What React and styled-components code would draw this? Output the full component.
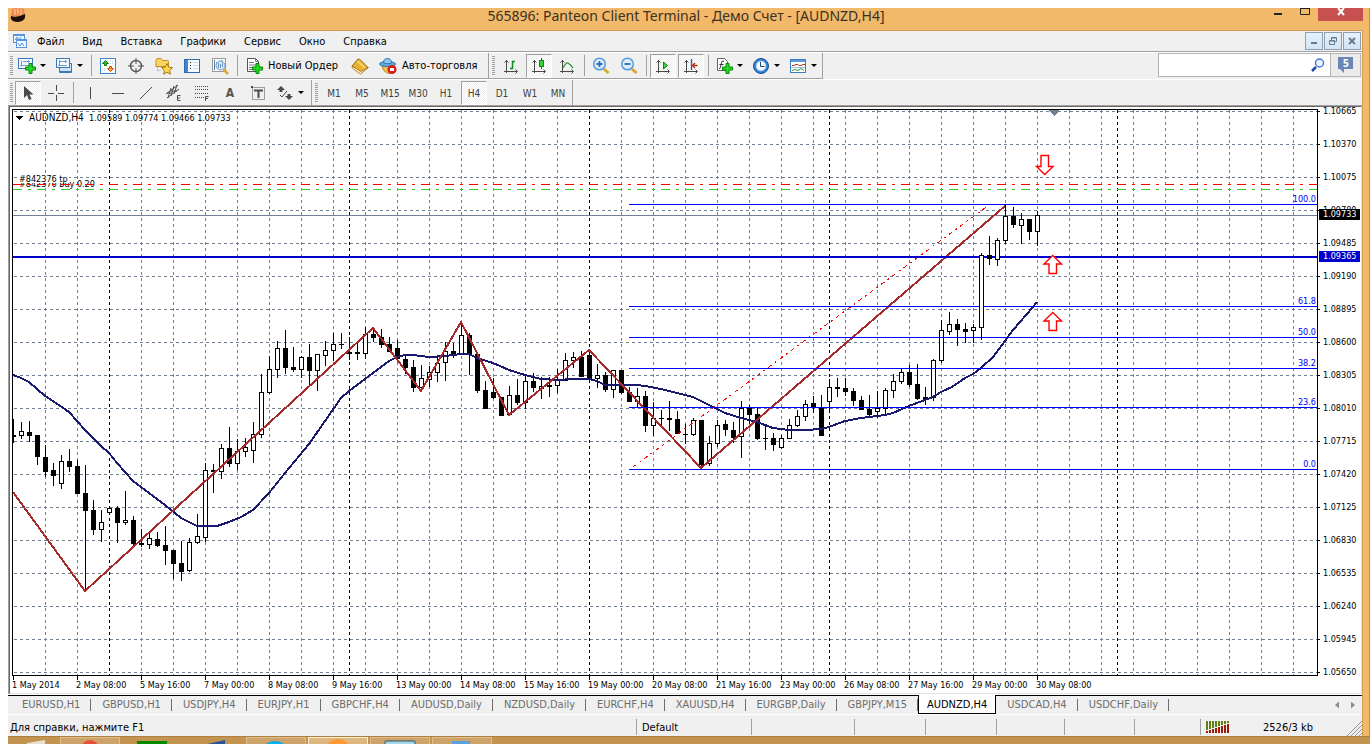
import React from "react";
import styled, { createGlobalStyle, css } from "styled-components";

const GlobalStyle = createGlobalStyle`
  * {
    box-sizing: border-box;
  }
  html, body {
    margin: 0;
    background: #ffffff;
    overflow: hidden;
  }
  body {
    padding: 8px 0 0 8px;
    font-family: "DejaVu Sans Condensed", "DejaVu Sans", "Noto Sans", sans-serif;
    font-size: 11px;
    color: #000000;
  }
  button, input {
    font: inherit;
    color: inherit;
    padding: 0;
    border: 0;
    background: none;
  }
`;

const Frame = styled.div`
  background: #f2b96b;
  border-right: 1px solid #c08f50;
`;

const TitleBar = styled.header`
  display: flex;
  align-items: flex-start;
  height: 22px;
  padding-right: 6px;
`;

const Title = styled.h1`
  flex: 1;
  margin: 0;
  padding-left: 80px;
  text-align: center;
  font-family: "Noto Sans", "Open Sans", sans-serif;
  font-size: 14px;
  font-weight: 400;
  line-height: 16px;
  color: #3b3022;
`;

const CaptionButton = styled.button`
  display: flex;
  justify-content: center;
  width: ${props => (props.$close ? "45px" : "27px")};
  height: 13px;
  background: ${props => (props.$close ? "#c75050" : "transparent")};
`;

const Client = styled.div`
  margin-right: 6px;
  border-top: 1px solid #d39d58;
  border-right: 1px solid #d39d58;
  background: #f0f0f0;
`;

const MenuBar = styled.nav`
  display: flex;
  align-items: center;
  gap: 18px;
  height: 21px;
  padding: 0 1px 0 4px;
  border-bottom: 1px solid #a0a0a0;
`;

const MenuIcon = styled.span`
  display: flex;
  width: 16px;
  margin-right: -9px;
`;

const MenuItem = styled.button`
  padding-top: 2px;
  line-height: 18px;
`;

const MdiButtons = styled.div`
  display: flex;
  gap: 1px;
  margin-left: auto;
`;

const MdiButton = styled.button`
  display: flex;
  align-items: center;
  justify-content: center;
  width: 18px;
  height: 18px;
  border: 1px solid #8e9fb2;
  background: linear-gradient(#e6f1fb, #d3e5f5);
`;

const ToolRow = styled.div`
  display: flex;
  justify-content: space-between;
  height: 27px;
  border-top: 1px solid #ffffff;
  ${props => props.$last && css`
    border-bottom: 1px solid #a0a0a0;
  `}
`;

const Groups = styled.div`
  display: flex;
  ${props => props.$lined && css`
    border-bottom: 1px solid #a0a0a0;
  `}
`;

const Group = styled.div`
  display: flex;
  align-items: center;
  padding-left: 2px;
  padding-right: ${props => props.$end || 0}px;
  border-right: 1px solid #a0a0a0;
`;

const Grip = styled.span`
  width: 3px;
  height: 20px;
  margin-right: ${props => (props.$wide ? "2px" : "1px")};
  margin-left: ${props => (props.$wide ? "1px" : "0")};
  background: repeating-linear-gradient(#a0a0a0 0 1px, #f0f0f0 1px 2px);
`;

const Divider = styled.span`
  width: 1px;
  height: 21px;
  margin: 0 2px 0 3px;
  background: #a0a0a0;
`;

const Tool = styled.button`
  display: flex;
  align-items: center;
  justify-content: center;
  width: 28px;
  height: 24px;
  font-size: 10px;
  color: #404040;
  ${props => props.$pressed && css`
    width: 26px;
    margin: 0 1px;
    border: 1px solid #ffffff;
    border-top-color: #a0a0a0;
    border-left-color: #a0a0a0;
    background: repeating-conic-gradient(#ffffff 0 25%, #f0f0f0 0 50%) 0 0 / 2px 2px;
  `}
`;

const PeriodName = styled.span`
  padding-top: 1px;
`;

const LetterTool = styled(Tool)`
  font-size: 12px;
  font-weight: 700;
  color: #555555;
`;

const DropTool = styled.button`
  display: flex;
  align-items: center;
  gap: 4px;
  width: 37px;
  height: 24px;
  padding-left: 4px;
  &::after {
    content: "";
    border: 3px solid transparent;
    border-top-color: #000000;
    border-bottom: 0;
  }
`;

const TextTool = styled.button`
  display: flex;
  align-items: center;
  gap: 5px;
  width: ${props => props.$width}px;
  height: 24px;
  padding-left: 5px;
  white-space: nowrap;
`;

const Search = styled.form`
  display: flex;
  align-items: center;
  width: 203px;
  height: 24px;
  margin-right: 1px;
  border: 1px solid #b4b4b4;
  background: #ffffff;
`;

const SearchInput = styled.input`
  flex: 1;
  min-width: 0;
  height: 22px;
  padding: 0 4px;
  outline: 0;
`;

const SearchButton = styled.button`
  display: flex;
  align-items: center;
  width: 19px;
  height: 22px;
`;

const NewsButton = styled.button`
  display: flex;
  align-items: center;
  justify-content: center;
  width: 30px;
  height: 22px;
  border-left: 1px solid #b4b4b4;
  background: #ebebeb;
`;

const ChartBack = styled.div`
  display: flow-root;
  background: #ffffff;
`;

const ChartWindow = styled.main`
  display: grid;
  grid-template-columns: minmax(0, 1fr) 43px;
  margin: 0 0 1px 1px;
  padding-left: 2px;
  border: 1px solid #696969;
  border-right-color: #e3e3e3;
  border-bottom-color: #e3e3e3;
  box-shadow: -1px 0 0 #a0a0a0;
  background: #ffffff;
  font-size: 9px;
`;

const Plot = styled.div`
  margin-top: 2px;
  border: 1px solid #000000;
`;

const PlotSvg = styled.svg`
  display: block;
  width: 100%;
  height: 565px;
  shape-rendering: crispEdges;
  font-size: 9px;
`;

const PriceAxis = styled.div`
  position: relative;
`;

const Price = styled.div`
  display: flex;
  align-items: center;
  gap: 3px;
  height: 8px;
  margin-bottom: 25px;
  &:last-of-type {
    margin-bottom: 0;
  }
  &::before {
    content: "";
    width: 2px;
    height: 1px;
    background: #000000;
  }
`;

const PriceTag = styled.span`
  position: absolute;
  left: 1px;
  right: 1px;
  top: ${props => props.$top}px;
  height: 11px;
  padding-left: 4px;
  line-height: 11px;
  color: #ffffff;
  background: ${props => props.$color};
`;

const TimeAxis = styled.div`
  display: flex;
  height: 17px;
  overflow: hidden;
`;

const Time = styled.div`
  flex: 0 0 64px;
  white-space: nowrap;
  line-height: 11px;
  &::before {
    content: "";
    display: block;
    width: 1px;
    height: 4px;
    margin-left: 1px;
    background: #000000;
  }
`;

const TabBar = styled.div`
  display: flex;
  height: 20px;
  padding-left: 3px;
  border-top: 1px solid #000000;
  border-bottom: 1px solid #ffffff;
`;

const Tab = styled.button`
  position: relative;
  flex: none;
  height: 18px;
  padding: 0 11px;
  line-height: 16px;
  color: #6d6d6d;
  &::after {
    content: "";
    position: absolute;
    right: 0;
    top: 3px;
    width: 1px;
    height: 12px;
    background: #6d6d6d;
  }
  ${props => props.$active && css`
    margin-top: -1px;
    height: 19px;
    padding: 1px 8px 0;
    border: 1px solid #000000;
    border-top: 0;
    color: #000000;
    background: #ffffff;
    &::after {
      display: none;
    }
  `}
`;

const TabScroll = styled.div`
  display: flex;
  align-items: center;
  gap: 12px;
  margin-left: auto;
  padding-right: 7px;
`;

const ScrollButton = styled.button`
  width: 4px;
  height: 7px;
  background: #8c8c8c;
  clip-path: ${props => (props.$next ? "polygon(0 0, 100% 50%, 0 100%)" : "polygon(100% 0, 0 50%, 100% 100%)")};
`;

const StatusBar = styled.footer`
  display: flex;
  align-items: flex-end;
  height: 21px;
`;

const StatusCell = styled.div`
  display: flex;
  align-items: center;
  flex: ${props => (props.$width ? `0 0 ${props.$width}px` : "1 1 0")};
  gap: 33px;
  min-width: 0;
  height: 16px;
  margin-bottom: 1px;
  padding-left: ${props => (props.$first ? "2px" : "5px")};
  white-space: nowrap;
  ${props => !props.$first && css`
    border-left: 1px solid #a0a0a0;
  `}
`;

const ResizeGrip = styled.svg`
  flex: none;
`;

const TaskBar = styled.div`
  display: flex;
  height: 8px;
  overflow: hidden;
  background: #c39350;
  border-top: 1px solid #ad803f;
`;

const Task = styled.button`
  display: flex;
  justify-content: center;
  align-items: flex-start;
  flex: none;
  width: ${props => (props.$narrow ? "50px" : "60px")};
  height: 30px;
  margin-right: 2px;
  border: 1px solid ${props => (props.$active ? "#fff0d8" : props.$open ? "#e0bf90" : "transparent")};
  background: ${props => (props.$active ? "#dfb87f" : props.$open ? "#cda369" : "transparent")};
`;

const menu = ["Файл", "Вид", "Вставка", "Графики", "Сервис", "Окно", "Справка"];
const periods = ["M1", "M5", "M15", "M30", "H1", "H4", "D1", "W1", "MN"];
const tabs = [
  "EURUSD,H1", "GBPUSD,H1", "USDJPY,H4", "EURJPY,H1", "GBPCHF,H4", "AUDUSD,Daily", "NZDUSD,Daily",
  "EURCHF,H4", "XAUUSD,H4", "EURGBP,Daily", "GBPJPY,M15", "AUDNZD,H4", "USDCAD,H4", "USDCHF,Daily",
];
const prices = [
  "1.10665", "1.10370", "1.10075", "1.09780", "1.09485", "1.09190", "1.08895", "1.08600", "1.08305",
  "1.08010", "1.07715", "1.07420", "1.07125", "1.06830", "1.06535", "1.06240", "1.05945", "1.05650",
];
const times = [
  "1 May 2014", "2 May 08:00", "5 May 16:00", "7 May 00:00", "8 May 08:00", "9 May 16:00",
  "13 May 00:00", "14 May 08:00", "15 May 16:00", "19 May 00:00", "20 May 08:00", "21 May 16:00",
  "23 May 00:00", "26 May 08:00", "27 May 16:00", "29 May 00:00", "30 May 08:00",
];
const fibo = [
  ["100.0", 94], ["61.8", 196], ["50.0", 227], ["38.2", 258], ["23.6", 297], ["0.0", 359],
];

// chart space starts at this point, one bar every 8px
const LEFT = 13;
const TOP = 110;
const STEP = 8;

// high, body top, body bottom, low, rising
const candles = [
  [419, 435, 437, 443, 0], [422, 431, 436, 439, 1], [421, 432, 436, 442, 0], [435, 435, 457, 465, 0],
  [445, 457, 472, 477, 0], [463, 470, 476, 486, 0], [455, 461, 484, 489, 1], [449, 461, 467, 472, 0],
  [460, 466, 494, 494, 0], [465, 493, 511, 591, 0], [500, 510, 530, 535, 0], [510, 522, 530, 542, 1],
  [506, 508, 513, 515, 1], [506, 508, 523, 543, 0], [491, 520, 523, 525, 1], [516, 520, 544, 545, 0],
  [529, 543, 545, 547, 0], [532, 538, 545, 549, 1], [532, 539, 546, 547, 0], [526, 545, 551, 565, 0],
  [550, 550, 564, 579, 0], [541, 563, 572, 581, 0], [538, 542, 571, 572, 1], [514, 536, 543, 544, 1],
  [463, 470, 538, 542, 1], [464, 470, 472, 493, 0], [444, 448, 472, 479, 1], [427, 448, 464, 467, 0],
  [439, 451, 464, 470, 1], [438, 447, 452, 457, 1], [422, 434, 451, 463, 1], [374, 392, 435, 438, 1],
  [356, 369, 393, 394, 1], [341, 348, 370, 378, 1], [330, 348, 368, 374, 0], [347, 367, 370, 372, 0],
  [356, 357, 370, 378, 1], [344, 357, 371, 385, 0], [354, 354, 371, 391, 1], [341, 350, 356, 366, 1],
  [333, 344, 351, 361, 1], [333, 344, 345, 349, 0], [337, 352, 354, 360, 0], [342, 352, 354, 360, 0],
  [327, 334, 354, 359, 1], [327, 334, 338, 342, 0], [329, 337, 345, 348, 0], [337, 344, 352, 352, 0],
  [340, 348, 359, 360, 0], [355, 359, 368, 374, 0], [360, 367, 388, 392, 0], [365, 378, 388, 390, 1],
  [366, 372, 380, 387, 1], [355, 363, 373, 382, 1], [342, 351, 363, 381, 1], [343, 351, 355, 358, 0],
  [322, 335, 355, 355, 1], [333, 335, 355, 375, 0], [354, 354, 391, 393, 0], [381, 390, 409, 409, 0],
  [378, 392, 398, 399, 0], [397, 397, 416, 416, 0], [386, 395, 415, 416, 1], [379, 395, 403, 405, 0],
  [374, 381, 403, 409, 1], [373, 381, 388, 392, 0], [377, 386, 389, 399, 1], [377, 385, 387, 397, 0],
  [369, 380, 386, 393, 1], [353, 360, 381, 381, 1], [352, 357, 361, 368, 1], [351, 357, 377, 377, 0],
  [350, 355, 379, 379, 0], [364, 375, 379, 388, 1], [372, 375, 390, 392, 0], [370, 370, 390, 398, 1],
  [370, 370, 393, 394, 0], [387, 392, 402, 402, 0], [388, 396, 402, 407, 1], [391, 396, 426, 432, 0],
  [402, 418, 426, 436, 1], [410, 418, 419, 427, 0], [401, 418, 420, 431, 0], [411, 419, 434, 434, 0],
  [424, 434, 435, 444, 0], [418, 420, 435, 436, 1], [420, 420, 465, 469, 0], [436, 443, 464, 466, 1],
  [420, 425, 444, 447, 1], [420, 424, 430, 436, 0], [422, 430, 438, 443, 0], [401, 408, 437, 458, 1],
  [405, 408, 415, 424, 0], [407, 414, 439, 440, 0], [426, 438, 439, 450, 0], [433, 438, 445, 451, 0],
  [435, 438, 448, 449, 1], [419, 425, 439, 439, 1], [410, 416, 426, 427, 1], [400, 404, 417, 421, 1],
  [396, 403, 407, 413, 0], [395, 407, 436, 436, 0], [379, 387, 402, 411, 1], [378, 387, 389, 397, 0],
  [378, 388, 392, 396, 0], [388, 391, 401, 406, 0], [396, 400, 410, 410, 0], [395, 409, 415, 416, 0],
  [391, 408, 412, 418, 1], [388, 390, 409, 416, 1], [374, 381, 391, 398, 1], [369, 372, 382, 384, 1],
  [365, 372, 385, 387, 0], [364, 384, 399, 400, 0], [387, 397, 399, 405, 0], [359, 360, 398, 401, 1],
  [320, 330, 361, 363, 1], [312, 324, 332, 335, 1], [319, 324, 330, 346, 0], [323, 329, 332, 343, 0],
  [324, 327, 331, 343, 1], [253, 255, 328, 340, 1], [236, 255, 259, 265, 0], [238, 240, 260, 266, 1],
  [205, 216, 241, 244, 1], [207, 216, 225, 228, 0], [213, 219, 226, 244, 1], [219, 219, 232, 240, 0],
  [211, 215, 232, 246, 1],
];

const zigzag = "13,492 85,591 373,328 421,391 461,322 509,415 589,350 701,468 1005,206";
const average =
  "13,375 21,378 29,382 37,389 45,396 53,401 69,412 77,421 85,430 101,446 109,453 117,463 133,481 149,493 " +
  "165,505 181,518 189,522 197,526 217,526 229,522 241,517 253,510 269,493 285,473 309,444 325,421 341,398 " +
  "349,391 373,373 389,361 397,357 405,355 413,355 429,357 445,356 461,354 469,354 477,358 493,363 509,370 " +
  "525,375 541,379 557,380 573,379 589,379 597,381 605,385 637,385 645,386 661,389 677,393 693,397 709,405 " +
  "725,413 741,418 757,422 773,428 789,430 805,430 821,429 829,427 845,421 861,418 885,415 893,413 909,406 " +
  "925,400 933,397 941,392 952,387 965,378 973,374 981,368 993,357 1005,341 1013,330 1027,314 1037,302";

const hLines = prices.map((p, i) => 1 + i * 33);
const vLines = Array.from({ length: 60 }, (_, i) => 32 + i * 32);
const dayLines = [96, 336, 576, 816, 1104];

const Candle = ({ index, bar }) => {
  const [high, top, bottom, low, up] = bar;
  const x = LEFT + index * STEP;
  const height = Math.max(bottom - top, 1);
  return (
    <g>
      <rect x={x} y={high} width="1" height={low - high} />
      <rect x={x - 2} y={top} width="5" height={height} />
      {up ? <rect x={x - 1} y={top + 1} width="3" height={Math.max(height - 2, 1)} fill="#fff" /> : null}
    </g>
  );
};

const Chart = () => (
  <PlotSvg role="img" aria-label="AUDNZD,H4">
    <g stroke="#708090" strokeDasharray="3 3">
      {hLines.map(y => <line key={y} x1="1" x2="100%" y1={y + 0.5} y2={y + 0.5} />)}
      {vLines.map(x => <line key={x} x1={x + 0.5} x2={x + 0.5} y1="0" y2="565" />)}
    </g>
    {dayLines.map(x => (
      <g key={x}>
        <rect x={x} y="0" width="1" height="565" fill="#fff" />
        <line x1={x + 0.5} x2={x + 0.5} y1="0" y2="565" stroke="#000" strokeDasharray="3 3" />
      </g>
    ))}
    <rect x="0" y="105" width="100%" height="1" fill="#708090" />
    <g transform={`translate(${-LEFT} ${-TOP})`}>
      {candles.map((bar, i) => <Candle key={i} index={i} bar={bar} />)}
      <polyline points={average} fill="none" stroke="#191970" strokeWidth="2" />
      <polyline points={zigzag} fill="none" stroke="#a52a2a" strokeWidth="2" />
      <line x1="633" y1="467" x2="989" y2="205" stroke="#f00" strokeDasharray="4 4 2 4" />
    </g>
    <rect x="0" y="146" width="100%" height="2" fill="#0000cd" />
    {fibo.map(([label, y]) => (
      <g key={label}>
        <svg x="616" y={y} width="100%" height="1">
          <rect width="100%" height="1" fill="#00f" />
        </svg>
        <text x="100%" y={y - 2} dx="-1" textAnchor="end" fill="#0000ff">{label}</text>
      </g>
    ))}
    <text x="6" y="77">#842376 buy 0.20</text>
    <rect x="6" y="65" width="50" height="8" fill="#fff" />
    <text x="6" y="72">#842376 tp</text>
    <line x1="0" x2="100%" y1="74.5" y2="74.5" stroke="#f00" strokeDasharray="9 6 3 6" />
    <line x1="0" x2="100%" y1="79.5" y2="79.5" stroke="#32cd32" strokeDasharray="9 6 3 6" />
    <g transform={`translate(${-LEFT} ${-TOP})`}>
      {/* candles stay above the level lines near the last day */}
      {candles.slice(121, 124).map((bar, i) => <Candle key={i} index={i + 121} bar={bar} />)}
      <g fill="#fff" stroke="#f00" strokeWidth="1.4" shapeRendering="auto">
        <path d="M1041 155.500h7.500v11h4.500l-8.250 8l-8.250-8h4.500z" />
        <path d="M1049 273.500h7.500v-9.500h5l-8.750-8.500l-8.750 8.500h5z" />
        <path d="M1049 330.500h7.500v-9.500h5l-8.750-8.500l-8.750 8.500h5z" />
      </g>
      <path d="M1049 110h10v1l-5 5l-5-5z" fill="#708090" />
    </g>
    <path d="M3 6h7l-4 4z" />
    <text x="16" y="11" fontSize="10">AUDNZD,H4</text>
    <text x="76" y="11">1.09589 1.09774 1.09466 1.09733</text>
  </PlotSvg>
);

const Icon = ({ children, size = 18 }) => (
  <svg width={size} height={size} viewBox="0 0 18 18" fill="none" aria-hidden="true">{children}</svg>
);

const Plus = () => (
  <path d="M11 6.500h3v3.500h3.500v3h-3.500v3.500h-3v-3.500h-3.500v-3h3.500z" fill="#1fe01f" stroke="#07830b" />
);

const NewChartIcon = () => (
  <Icon>
    <rect x="0.500" y="1.500" width="14" height="10" fill="#f4faff" stroke="#3a78b8" />
    <path d="M3.500 3.500v6M2 8.500h10M5 4.500h7M10.500 3v3" stroke="#6f9cc8" />
    <Plus />
  </Icon>
);

const ProfilesIcon = () => (
  <Icon>
    <path d="M4.500 6.500h12v9h-12z" fill="#cfe3f6" stroke="#3a78b8" />
    <path d="M5 14.500h11" stroke="#3a78b8" />
    <rect x="1.500" y="1.500" width="13" height="9" fill="#f4faff" stroke="#3a78b8" />
    <path d="M4.500 3v6M3 8.500h9M5 4.500h7M10.500 3v3" stroke="#6f9cc8" />
  </Icon>
);

const MarketIcon = () => (
  <Icon>
    <rect x="1.500" y="1.500" width="15" height="15" fill="#fff" stroke="#3a86cf" />
    <path d="M11 4.500h4M11 6.500h4M3 11.500h4M3 13.500h4" stroke="#b9cfe4" strokeDasharray="1 1" />
    <path d="M6.500 3.500l3 3h-2v2h-2v-2h-2z" fill="#2fc42f" stroke="#0a7a0a" />
    <path d="M11.500 14.500l3-3h-2v-2h-2v2h-2z" fill="#ffb03c" stroke="#d8480c" />
  </Icon>
);

const TargetIcon = () => (
  <Icon>
    <circle cx="9" cy="9" r="5.500" stroke="#555" strokeWidth="1.400" />
    <path d="M9 1v6M9 11v6M1 9h6M11 9h6" stroke="#555" />
  </Icon>
);

const FolderIcon = () => (
  <Icon>
    <path d="M1 3.500q0-2 2-2h3l1.500 2h5q1 0 1 1v5h-12.500z" fill="#f9d65e" stroke="#c09020" />
    <path d="M2.500 10v4M2.500 13.500h4" stroke="#999" strokeDasharray="1 1" />
    <path d="M12 6.500l1.700 3.600 3.800.5-2.800 2.700.7 3.900-3.400-1.900-3.400 1.900.7-3.900-2.800-2.700 3.800-.5z" fill="#ffd84a" stroke="#a87714" />
  </Icon>
);

const DataIcon = () => (
  <Icon>
    <rect x="1.500" y="2.500" width="15" height="13" fill="#f8fcff" stroke="#2b6cb4" />
    <rect x="2" y="3" width="3" height="12" fill="#3d87d2" />
    <path d="M7 5.500h1M7 8.500h1M7 11.500h1" stroke="#222" />
    <path d="M10 5.500h5M10 8.500h5M10 11.500h5" stroke="#c9dbed" />
  </Icon>
);

const TesterIcon = () => (
  <Icon>
    <rect x="1.500" y="1.500" width="13" height="13" fill="#fafafa" stroke="#9a9a9a" />
    <path d="M3.500 3v10M5 5.500h2v5M11 3v3" stroke="#5c7fa6" />
    <path d="M12.500 12.500l4.500 4.500" stroke="#d8a72c" strokeWidth="2.500" />
    <circle cx="9.500" cy="8.500" r="4.500" fill="#cfe6fa" fillOpacity="0.800" stroke="#6f9ccc" />
    <path d="M7.500 6v5M9.500 7v4M11.500 6v4" stroke="#6d97c4" />
  </Icon>
);

const OrderIcon = () => (
  <Icon>
    <path d="M2.500 1.500h8l3 3v10h-11z" fill="#fff" stroke="#555" />
    <path d="M10.500 1.500v3h3M4 5.500h5M4 8h7M4 10.500h4M4 12.500h4" stroke="#777" />
    <Plus />
  </Icon>
);

const BookIcon = () => (
  <Icon>
    <path d="M1 9l6-7q1.500 0 2.500 1l7.500 7.500-7 5.500z" fill="#e9b32f" stroke="#9a6a10" />
    <path d="M1 9q0 2 1.500 3l7 5 7.500-6v-1l-7 4.500z" fill="#fff0c0" stroke="#9a6a10" strokeWidth="0.800" />
    <path d="M6.500 4l7.500 7" stroke="#f9dd80" strokeWidth="1.500" />
  </Icon>
);

const AutoIcon = () => (
  <Icon>
    <path d="M3 9q1 6 7 7.500 5-2 5-7.500z" fill="#f2c24b" stroke="#b98316" />
    <ellipse cx="8.500" cy="7" rx="8" ry="2.500" fill="#5fa9dc" stroke="#2e78b2" />
    <path d="M4.500 6q0-4.500 4-4.500t4 4.500q-4 1.500-8 0z" fill="#8cc7ee" stroke="#2e78b2" />
    <circle cx="13" cy="12.500" r="4.500" fill="#d81e14" />
    <rect x="11" y="11" width="4" height="3" fill="#fff" />
  </Icon>
);

const Axes = () => (
  <>
    <path d="M4.500 3v13M2 14.500h13" stroke="#4a4a4a" />
    <path d="M2.500 5.500l2-2 2 2M13.500 12.500l2 2-2 2" stroke="#4a4a4a" />
  </>
);

const BarsIcon = () => (
  <Icon><Axes /><path d="M10.500 4v8M10 4.500h3M8 11.500h2.500" stroke="#0a8a1a" strokeWidth="1.500" /></Icon>
);

const CandlesIcon = () => (
  <Icon>
    <Axes />
    <path d="M11.500 1v11" stroke="#0a6b12" />
    <rect x="9.500" y="3.500" width="4" height="6" fill="#35d435" stroke="#0a8a1a" />
  </Icon>
);

const LineIcon = () => (
  <Icon><Axes /><path d="M5 11q3-6 5-5t5 5" stroke="#2c9a3c" strokeWidth="1.300" /></Icon>
);

const ZoomIcon = ({ plus }) => (
  <Icon>
    <path d="M12 12l4.500 4" stroke="#d9a82c" strokeWidth="3" />
    <circle cx="7.500" cy="7" r="5.800" fill="#d9edfc" stroke="#5b9ad8" strokeWidth="1.500" />
    <path d={plus ? "M4.500 7h6M7.500 4v6" : "M4.500 7h6"} stroke="#2f6cb0" strokeWidth="1.800" />
  </Icon>
);

const ScrollIcon = () => (
  <Icon><Axes /><path d="M9.500 5v7l4-3.500z" fill="#3fd54a" stroke="#0a8a1a" /></Icon>
);

const ShiftIcon = () => (
  <Icon>
    <Axes />
    <path d="M9.500 2v11" stroke="#2a5f9c" strokeWidth="1.400" />
    <path d="M10.500 8.500h5M13 6l-2.500 2.500 2.500 2.500" stroke="#c23010" strokeWidth="1.400" />
  </Icon>
);

const IndicatorIcon = () => (
  <Icon>
    <path d="M2.500 1.500h7l3 3v9h-10z" fill="#fff" stroke="#666" />
    <path d="M9 4.500q-2-1.500-2.500 1l-1 5q0 1-1.500 1M4.500 7.500h4" stroke="#333" />
    <Plus />
  </Icon>
);

const ClockIcon = () => (
  <Icon>
    <circle cx="9" cy="9" r="7.500" fill="#2f80d8" stroke="#154f97" />
    <circle cx="9" cy="9" r="5" fill="#f7fbff" stroke="#8fbce8" />
    <path d="M8.500 5v4.500h4" stroke="#244a74" />
  </Icon>
);

const TemplateIcon = () => (
  <Icon>
    <rect x="1.500" y="2.500" width="15" height="13" fill="#fff" stroke="#3a7cc0" />
    <rect x="2" y="3" width="14" height="2" fill="#5b9bd8" />
    <path d="M3 8.500h2l2-1h2l1 1h2l2-1h2" stroke="#b03020" />
    <path d="M3 13.500l3-1 3 1 3-2 3 2" stroke="#2c9a3c" />
    <path d="M2 10.500h14" stroke="#9dc0e2" />
  </Icon>
);

const gray = "#4a4a4a";

const drawTools = [
  ["Вертикальная линия", <path key="v" d="M9.500 3v12" stroke={gray} />],
  ["Горизонтальная линия", <path key="h" d="M3 9.500h12" stroke={gray} />],
  ["Трендовая линия", <path key="l" d="M3 15L15 3" stroke={gray} />],
  ["Канал", (
    <g key="c" stroke={gray}>
      <path d="M1 10L13 1M2 14L14 5M3 14L6 4M6 12L9 2M9 10L12 1M2 9h5M6 7h6" />
      <path d="M15.500 11.500h-3v5h3M12.500 14h2.500" />
    </g>
  )],
  ["Фибоначчи", (
    <g key="f" stroke={gray}>
      <path d="M2 2.500h13M2 5.500h13M2 9.500h13M2 13.500h9" strokeDasharray="1 1" />
      <path d="M15.500 12.500h-3v4.500M12.500 14.500h2.500" />
    </g>
  )],
];

const Toolbar = () => (
  <ToolRow>
    <Groups $lined>
      <Group $end="4">
        <Grip />
        <DropTool aria-label="Новый график"><NewChartIcon /></DropTool>
        <DropTool aria-label="Профили"><ProfilesIcon /></DropTool>
        <Divider />
        <Tool aria-label="Обзор рынка"><MarketIcon /></Tool>
        <Tool aria-label="Окно данных"><TargetIcon /></Tool>
        <Tool aria-label="Навигатор"><FolderIcon /></Tool>
        <Tool aria-label="Терминал"><DataIcon /></Tool>
        <Tool aria-label="Тестер"><TesterIcon /></Tool>
        <Divider />
        <TextTool $width={106}><OrderIcon />Новый Ордер</TextTool>
        <Tool aria-label="Редактор"><BookIcon /></Tool>
        <TextTool $width={110}><AutoIcon />Авто-торговля</TextTool>
      </Group>
      <Group>
        <Grip $wide />
        <Tool aria-label="Бары"><BarsIcon /></Tool>
        <Tool $pressed aria-label="Свечи"><CandlesIcon /></Tool>
        <Tool aria-label="Линия"><LineIcon /></Tool>
        <Divider />
        <Tool aria-label="Увеличить"><ZoomIcon plus /></Tool>
        <Tool aria-label="Уменьшить"><ZoomIcon /></Tool>
        <Divider />
        <Tool $pressed aria-label="Автопрокрутка"><ScrollIcon /></Tool>
        <Tool $pressed aria-label="Сдвиг графика"><ShiftIcon /></Tool>
        <Divider />
        <DropTool aria-label="Индикаторы"><IndicatorIcon /></DropTool>
        <DropTool aria-label="Периоды"><ClockIcon /></DropTool>
        <DropTool aria-label="Шаблоны"><TemplateIcon /></DropTool>
      </Group>
    </Groups>
    <Search onSubmit={e => e.preventDefault()}>
      <SearchInput aria-label="Поиск" />
      <SearchButton aria-label="Найти">
        <svg width="14" height="14" viewBox="0 0 14 14" fill="none">
          <path d="M5 9l-4 4" stroke="#1c48a8" strokeWidth="2.500" />
          <circle cx="8.500" cy="5" r="4" fill="#eef4ff" stroke="#4a78d8" strokeWidth="1.500" />
        </svg>
      </SearchButton>
      <NewsButton aria-label="5">
        <svg width="18" height="16" viewBox="0 0 18 16">
          <path d="M1 0h15v12h-9v4l-4-4h-2z" fill="#6a86b4" />
          <text x="9" y="10" textAnchor="middle" fontSize="10" fontWeight="700" fill="#fff">5</text>
        </svg>
      </NewsButton>
    </Search>
  </ToolRow>
);

const DrawBar = () => (
  <ToolRow $last>
    <Groups>
      <Group $end="2">
        <Grip />
        <Tool $pressed aria-label="Курсор">
          <Icon><path d="M5 2v12l3-3 2 5 2.500-1-2-4.500h4z" fill={gray} /></Icon>
        </Tool>
        <Tool aria-label="Перекрестие">
          <Icon><path d="M9.500 1v6M9.500 11v6M1 9.500h6M11 9.500h6" stroke={gray} /></Icon>
        </Tool>
        <Divider />
        {drawTools.map(([name, shape]) => <Tool key={name} aria-label={name}><Icon>{shape}</Icon></Tool>)}
        <LetterTool>A</LetterTool>
        <Tool aria-label="Текстовая метка">
          <Icon>
            <rect x="3.500" y="3.500" width="12" height="12" stroke={gray} strokeDasharray="1 1" />
            <path d="M5 6.500h9M9.500 6v8" stroke={gray} strokeWidth="2" />
            <rect x="2" y="2" width="2" height="2" fill={gray} />
          </Icon>
        </Tool>
        <DropTool aria-label="Стрелки">
          <Icon>
            <path d="M5 2l4 4h-2.500v2h-3v-2h-2.500zM13 16l-4-4h2.500v-2h3v2h2.500z" fill={gray} />
            <path d="M4 11l2 2 5-6" stroke={gray} />
          </Icon>
        </DropTool>
      </Group>
      <Group>
        <Grip $wide />
        {periods.map(p => <Tool key={p} $pressed={p === "H4"}><PeriodName>{p}</PeriodName></Tool>)}
      </Group>
    </Groups>
  </ToolRow>
);

const App = () => (
  <>
    <GlobalStyle />
    <Frame>
      <TitleBar>
        <svg width="20" height="18" viewBox="0 0 20 18">
          <path d="M4 1q6-2 12 0l1 7H3z" fill="#ef8a4c" />
          <path d="M7 1v6M10 0v6M13 1v6" stroke="#fbd3b0" />
          <path d="M3 8q6 2 14-2 1 5-3 7-5 2-9 0-3-2-2-5z" fill="#1c0d08" />
        </svg>
        <Title>565896: Panteon Client Terminal - Демо Счет - [AUDNZD,H4]</Title>
        <CaptionButton aria-label="Свернуть">
          <svg width="8" height="8"><rect y="5" width="8" height="2" fill="#222" /></svg>
        </CaptionButton>
        <CaptionButton aria-label="Развернуть">
          <svg width="10" height="8"><path d="M.5 0v6.500h9V0M0 .5h10" fill="none" stroke="#222" /></svg>
        </CaptionButton>
        <CaptionButton $close aria-label="Закрыть">
          <svg width="8" height="8"><path d="M1 0l6 7M7 0l-6 7" stroke="#fff" strokeWidth="2" /></svg>
        </CaptionButton>
      </TitleBar>
      <Client>
        <MenuBar>
          <MenuIcon>
            <svg width="16" height="16" fill="none" stroke="#5b93d8">
              <rect x="1.500" y="1.500" width="11" height="8" fill="#eef6ff" />
              <path d="M1 2.500h12M3 7l2-3 2 3 2-3" />
              <rect x="4.500" y="6.500" width="10" height="8" fill="#eef6ff" />
              <path d="M4 7.500h11M6 10l2 3 2-3 2 3" />
            </svg>
          </MenuIcon>
          {menu.map(item => <MenuItem key={item}>{item}</MenuItem>)}
          <MdiButtons>
            <MdiButton aria-label="Свернуть окно">
              <svg width="8" height="8"><rect x="1" y="5" width="6" height="2" fill="#6c7a8a" /></svg>
            </MdiButton>
            <MdiButton aria-label="Восстановить окно">
              <svg width="8" height="8" fill="none" stroke="#6c7a8a">
                <path d="M2.500 3V.5h5v4H6M2 1h6M.5 3.500h5v4h-5zM0 4h6" />
              </svg>
            </MdiButton>
            <MdiButton aria-label="Закрыть окно">
              <svg width="8" height="8"><path d="M1 1l6 6M7 1l-6 6" stroke="#6c7a8a" strokeWidth="2" /></svg>
            </MdiButton>
          </MdiButtons>
        </MenuBar>
        <Toolbar />
        <DrawBar />
        <ChartBack>
          <ChartWindow>
            <Plot><Chart /></Plot>
            <PriceAxis>
              {prices.map(p => <Price key={p}>{p}</Price>)}
              <PriceTag $top={102} $color="#000000">1.09733</PriceTag>
              <PriceTag $top={144} $color="#0000cd">1.09365</PriceTag>
            </PriceAxis>
            <TimeAxis>
              {times.map(t => <Time key={t}>{t}</Time>)}
            </TimeAxis>
          </ChartWindow>
        </ChartBack>
        <TabBar>
          {tabs.map(t => <Tab key={t} $active={t === "AUDNZD,H4"}>{t}</Tab>)}
          <TabScroll>
            <ScrollButton aria-label="Назад" />
            <ScrollButton $next aria-label="Вперед" />
          </TabScroll>
        </TabBar>
        <StatusBar>
          <StatusCell $first>Для справки, нажмите F1</StatusCell>
          <StatusCell $width={115}>Default</StatusCell>
          <StatusCell $width={103} />
          <StatusCell $width={71} />
          <StatusCell $width={71} />
          <StatusCell $width={68} />
          <StatusCell $width={70} />
          <StatusCell $width={66} />
          <StatusCell $width={146}>
            <svg width="24" height="12" shapeRendering="crispEdges">
              {[0, 1, 2, 3, 4, 5, 6, 7].map(i => (
                <g key={i}>
                  <rect x={i * 3} y="0" width="2" height={9 - i} fill="#5f7f10" />
                  <rect x={i * 3} y={10 - i} width="2" height={2 + i} fill="#9a1c08" />
                </g>
              ))}
            </svg>
            2526/3 kb
          </StatusCell>
          <ResizeGrip width="16" height="16" stroke="#909090">
            <path d="M1 16L16 1M5 16L16 5M9 16l7-7M13 16l3-3" />
          </ResizeGrip>
        </StatusBar>
      </Client>
    </Frame>
    <TaskBar>
      <Task $narrow aria-label="Проводник">
        <svg width="40" height="8"><path d="M14 5L32 2v6H14z" fill="#e8e0d4" /></svg>
      </Task>
      <Task $open aria-label="Браузер">
        <svg width="20" height="16"><circle cx="10" cy="11" r="9" fill="#e8503a" /></svg>
      </Task>
      <Task aria-label="Магазин">
        <svg width="30" height="8"><rect y="3" width="30" height="5" fill="#008a00" /></svg>
      </Task>
      <Task aria-label="Документы">
        <svg width="22" height="8"><path d="M0 7L22 2v6H0z" fill="#2a5699" /></svg>
      </Task>
      <Task $open aria-label="Skype">
        <svg width="24" height="16"><ellipse cx="11" cy="9" rx="10" ry="6" fill="#00aff0" /></svg>
      </Task>
      <Task $active aria-label="Firefox">
        <svg width="26" height="16"><circle cx="13" cy="14" r="13" fill="#ff9933" /></svg>
      </Task>
      <Task $open aria-label="Терминал">
        <svg width="32" height="12"><rect x="1" y="3" width="30" height="9" rx="1" fill="#a6d8ea" stroke="#24546a" /></svg>
      </Task>
      <Task $open aria-label="Блокнот">
        <svg width="20" height="12"><rect y="3" width="18" height="9" fill="#5aa0dc" /></svg>
      </Task>
    </TaskBar>
  </>
);

export default App;
